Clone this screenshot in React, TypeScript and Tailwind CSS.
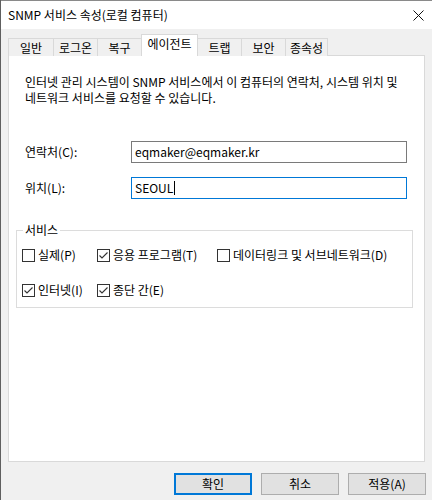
import React from 'react'

const TABS = [
  { label: '일반', w: 'w-[45px]', cls: 'border-l' },
  { label: '로그온', w: 'w-[44px]', cls: 'border-l' },
  { label: '복구', w: 'w-[44px]', cls: 'border-l' },
  { label: '에이전트', w: 'w-[57px]', cls: 'border-l border-r', active: true },
  { label: '트랩', w: 'w-[43px]', cls: '' },
  { label: '보안', w: 'w-[44px]', cls: 'border-l' },
  { label: '종속성', w: 'w-[43px]', cls: 'border-l border-r' },
]

function CheckBox({ checked, label }: { checked?: boolean; label: string }) {
  return (
    <div className="flex items-center gap-[3px] whitespace-nowrap">
      <div className="w-[13px] h-[13px] border border-[#333333] bg-white flex items-center justify-center">
        {checked && (
          <svg width="11" height="11" viewBox="0 0 11 11">
            <polyline points="1.5,5.5 4,8 9.5,2.5" fill="none" stroke="#333333" strokeWidth="1.1" />
          </svg>
        )}
      </div>
      <span>{label}</span>
    </div>
  )
}

export default function App() {
  return (
    <div className="w-[432px] h-[500px] bg-[#f0f0f0] border-l border-[#5f5f5f] flex flex-col text-[12px] text-black font-['Noto_Sans_CJK_KR',sans-serif] overflow-hidden">
      {/* Title bar */}
      <div className="h-[29px] shrink-0 bg-white border-t border-[#8a8a8a] flex items-center justify-between pl-[7px] pr-[8px]">
        <span className="whitespace-nowrap">SNMP 서비스 속성(로컬 컴퓨터)</span>
        <svg width="11" height="11" viewBox="0 0 11 11">
          <path d="M0.5 0.5 L10.5 10.5 M10.5 0.5 L0.5 10.5" stroke="#111111" strokeWidth="1" />
        </svg>
      </div>

      <div className="px-[7px] pt-[5px]">
        {/* Tabs */}
        <div className="flex items-end h-[22px]">
          {TABS.map((t) =>
            t.active ? (
              <div
                key={t.label}
                className={`relative z-10 h-[22px] ${t.w} bg-white border-t border-[#d9d9d9] ${t.cls} flex items-center justify-center pb-[3px] whitespace-nowrap`}
              >
                {t.label}
              </div>
            ) : (
              <div
                key={t.label}
                className={`h-[18px] ${t.w} bg-[#f0f0f0] border-t border-[#d9d9d9] ${t.cls} flex items-center justify-center whitespace-nowrap`}
              >
                {t.label}
              </div>
            )
          )}
        </div>

        {/* Panel */}
        <div className="-mt-px h-[407px] bg-white border border-[#d9d9d9] flex flex-col">
          <p className="pl-[16px] pt-[18px] leading-[16px] whitespace-nowrap">
            인터넷 관리 시스템이 SNMP 서비스에서 이 컴퓨터의 연락처, 시스템 위치 및
            <br />
            네트워크 서비스를 요청할 수 있습니다.
          </p>

          <div className="flex items-center mt-[35px] pl-[16px]">
            <span className="w-[106px]">연락처(C):</span>
            <div className="w-[276px] h-[22px] border border-[#7a7a7a] flex items-center px-[3px]">
              eqmaker@eqmaker.kr
            </div>
          </div>

          <div className="flex items-center mt-[14px] pl-[16px]">
            <span className="w-[106px]">위치(L):</span>
            <div className="w-[276px] h-[22px] border border-[#0078d7] flex items-center px-[3px]">
              SEOUL
              <span className="w-px h-[14px] bg-black ml-px" />
            </div>
          </div>

          {/* Services group */}
          <div className="relative mt-[31px] ml-[7px] w-[397px] h-[78px] border border-[#dcdcdc] flex flex-col gap-[17px] pt-[15px] pl-[5px]">
            <span className="absolute -top-[9px] left-[6px] bg-white px-[2px] leading-[16px]">서비스</span>
            <div className="flex">
              <div className="w-[75px]">
                <CheckBox label="실제(P)" />
              </div>
              <div className="w-[120px]">
                <CheckBox checked label="응용 프로그램(T)" />
              </div>
              <CheckBox label="데이터링크 및 서브네트워크(D)" />
            </div>
            <div className="flex">
              <div className="w-[75px]">
                <CheckBox checked label="인터넷(I)" />
              </div>
              <CheckBox checked label="종단 간(E)" />
            </div>
          </div>
        </div>
      </div>

      {/* Buttons */}
      <div className="flex justify-end gap-[9px] pr-[6px] mt-[11px]">
        <button className="w-[78px] h-[22px] bg-[#e1e1e1] border border-[#0078d7] shadow-[inset_0_0_0_1px_#0078d7]">확인</button>
        <button className="w-[78px] h-[22px] bg-[#e1e1e1] border border-[#adadad]">취소</button>
        <button className="w-[78px] h-[22px] bg-[#e1e1e1] border border-[#adadad]">적용(A)</button>
      </div>
    </div>
  )
}
